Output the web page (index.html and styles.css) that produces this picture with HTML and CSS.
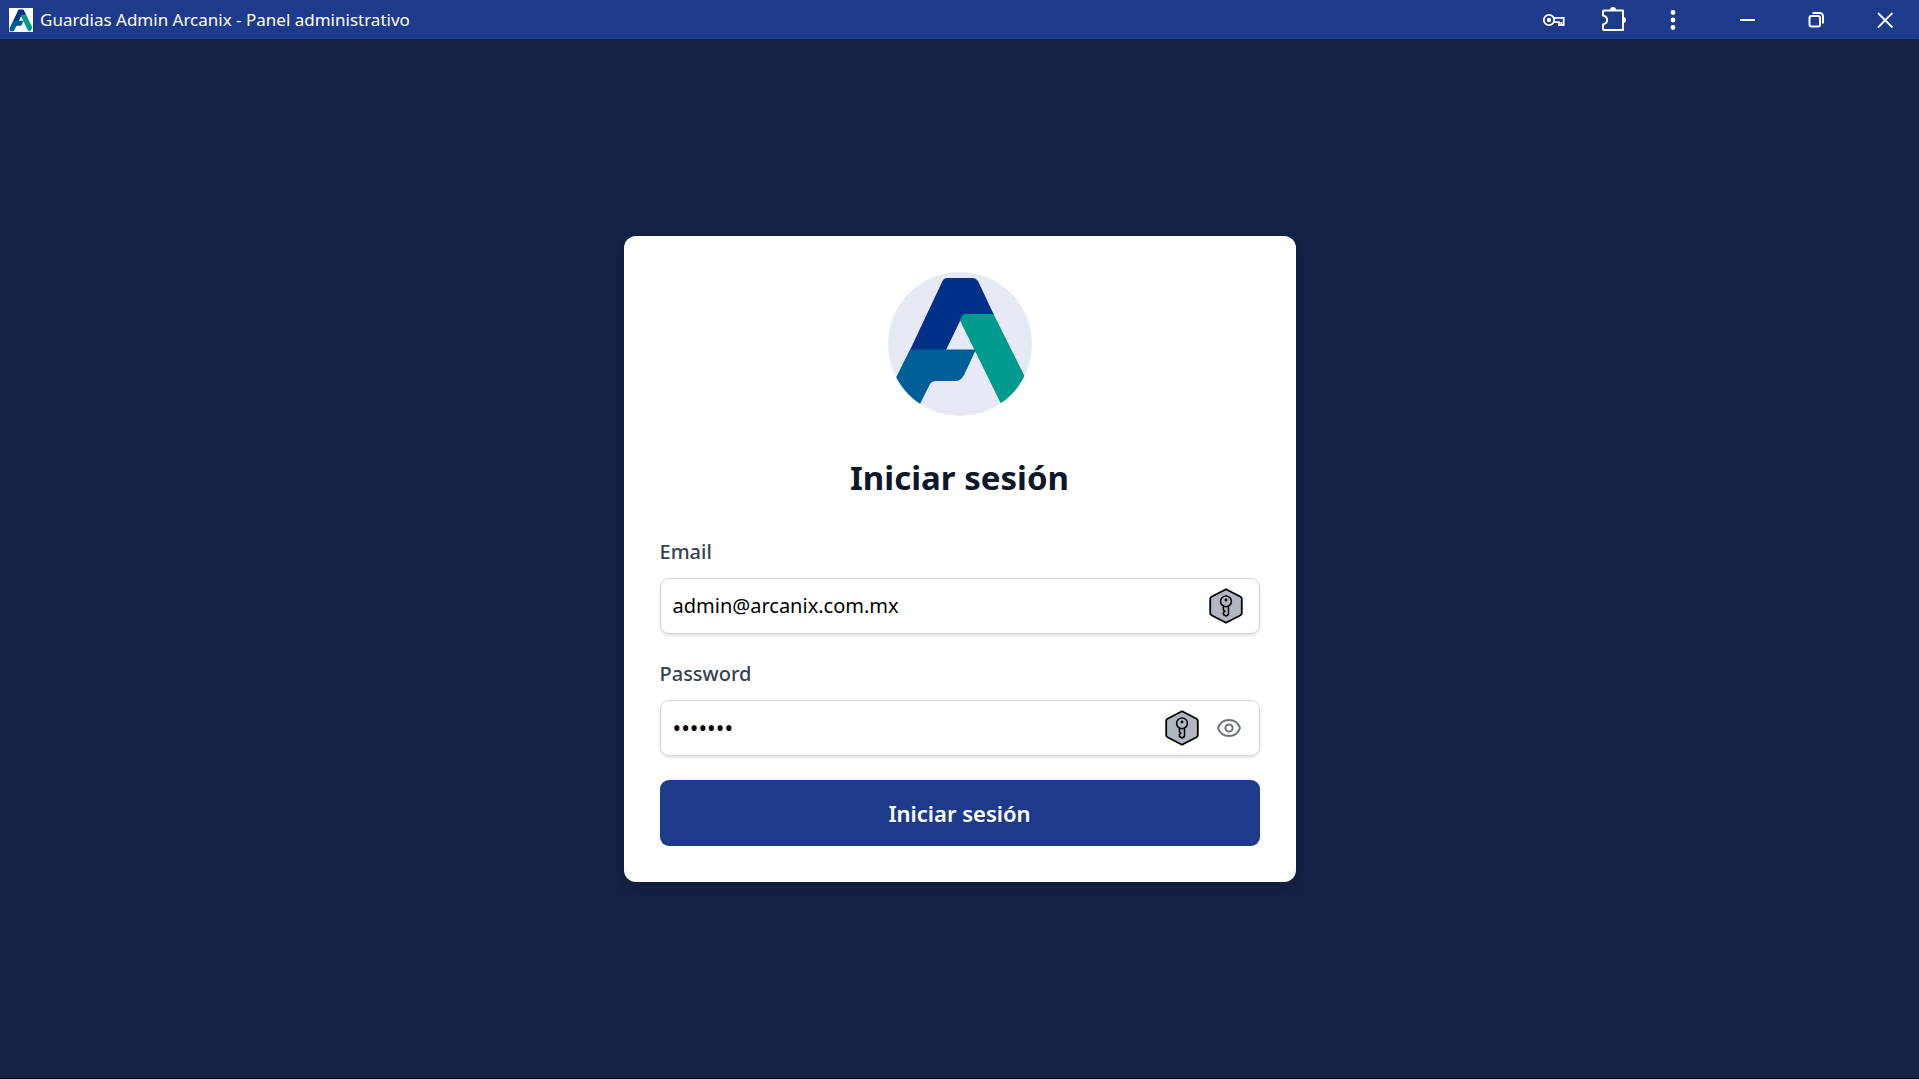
FILE: index.html
```html
<!DOCTYPE html>
<html lang="es">
<head>
<meta charset="utf-8">
<meta name="viewport" content="width=device-width, initial-scale=1">
<title>Guardias Admin Arcanix - Panel administrativo</title>
<link rel="stylesheet" href="styles.css">
</head>
<body class="app">
<svg class="sprite" aria-hidden="true">
  <symbol id="mark" viewBox="0 0 144 144">
    <path fill="#003087" d="M22 78 54.500 9Q56 6 59 6H85Q88 6 90 9L106 43H76L72.500 48 58 78Z"/>
    <path fill="#009b8e" d="M72 48.500 74 44Q75 42 77 42H105.500L146 123 122 150Z"/>
    <path fill="#005e97" d="M22 77.500H88L76 103Q73 109 67 109H48Q44 109 42 112L22 152-12 146Z"/>
  </symbol>
  <symbol id="badge" viewBox="0 0 34 36">
    <path d="M17 1.200 31.500 8.800Q32.800 9.500 32.800 11V25Q32.800 26.500 31.500 27.200L17 34.800 2.500 27.200Q1.200 26.500 1.200 25V11Q1.200 9.500 2.500 8.800Z" fill="#b0b7c0" stroke="#000" stroke-width="1.800" stroke-linejoin="round"/>
    <g fill="none" stroke="#000" stroke-width="1.500" stroke-linejoin="round">
      <circle cx="17" cy="13.300" r="5.400"/>
      <path d="M14.400 18.300V22l1.500 1.200-1.500 1.400V26.500L17.200 28 19.500 26.500V18.300"/>
    </g>
    <circle cx="17" cy="12" r="1.400"/>
  </symbol>
</svg>

<header class="titlebar">
  <svg class="titlebar-logo" viewBox="-4 -4 152 152" aria-hidden="true"><use href="#mark" width="144" height="144"/></svg>
  <span class="titlebar-title">Guardias Admin Arcanix - Panel administrativo</span>
  <div class="tools">
    <button class="tool" type="button" aria-label="Contraseñas">
      <svg width="24" height="24" viewBox="0 0 24 24" fill="none" stroke="#fff" stroke-width="1.800"><circle cx="7" cy="12" r="5.200"/><circle cx="7" cy="12" r="2.200" fill="#fff" stroke="none"/><path d="M11.800 9.800H21.700V17H17V14.200H11.800M19.300 14V17"/></svg>
    </button>
    <button class="tool" type="button" aria-label="Extensiones">
      <svg width="26" height="26" viewBox="0 0 26 26" fill="none" stroke="#fff" stroke-width="2" stroke-linejoin="round"><path d="M3 3.500H22V23H3Q2 23 2 22V17.500C7.500 16 7.500 10 2 8.500V4.500Q2 3.500 3 3.500Z"/><path fill="#fff" stroke="none" d="M9 3A3 3 0 0 1 15 3ZM22 10A3 3 0 0 1 22 16Z"/></svg>
    </button>
    <button class="tool" type="button" aria-label="Menú">
      <svg width="24" height="24" viewBox="0 0 24 24" fill="#fff"><circle cx="11" cy="4.500" r="2.400"/><circle cx="11" cy="12" r="2.400"/><circle cx="11" cy="19.500" r="2.400"/></svg>
    </button>
  </div>
  <div class="window-controls">
    <button class="window-button" type="button" aria-label="Minimizar">
      <svg width="16" height="16" viewBox="0 0 16 16" stroke="#fff" stroke-width="2"><path d="M1 8H16"/></svg>
    </button>
    <button class="window-button" type="button" aria-label="Restaurar">
      <svg width="16" height="16" viewBox="0 0 16 16" fill="none" stroke="#fff" stroke-width="2"><rect x="1.500" y="4" width="10.500" height="10.500" rx="2"/><path d="M4.500 1H11.500Q15 1 15 4.500V11.500"/></svg>
    </button>
    <button class="window-button" type="button" aria-label="Cerrar">
      <svg width="16" height="16" viewBox="0 0 16 16" stroke="#fff" stroke-width="1.900"><path d="M1 1 15.500 15.500M15.500 1 1 15.500"/></svg>
    </button>
  </div>
</header>

<main class="page">
  <form class="card">
    <svg class="logo" viewBox="0 0 144 144" role="img" aria-label="Arcanix"><rect width="144" height="144" fill="#e7eaf4"/><use href="#mark" width="144" height="144"/></svg>
    <h1 class="heading">Iniciar sesión</h1>
    <div class="field">
      <label class="label" for="email">Email</label>
      <div class="control">
        <input class="input" id="email" type="email" value="admin@arcanix.com.mx">
        <svg class="badge" aria-hidden="true"><use href="#badge"/></svg>
      </div>
    </div>
    <div class="field">
      <label class="label" for="password">Password</label>
      <div class="control control-password">
        <input class="input input-password" id="password" type="password" value="arcanix">
        <svg class="badge" aria-hidden="true"><use href="#badge"/></svg>
        <button class="reveal" type="button" aria-label="Mostrar contraseña">
          <svg width="26" height="26" viewBox="0 0 26 26" fill="none" stroke="#6b7280" stroke-width="2" stroke-linejoin="round"><circle cx="13" cy="13" r="3.600"/><path d="M2 13C3.700 8 8 5 13 5s9.300 3 11 8c-1.700 5-6 8-11 8S3.700 18 2 13z"/></svg>
        </button>
      </div>
    </div>
    <button class="submit" type="submit">Iniciar sesión</button>
  </form>
</main>
</body>
</html>
```
FILE: styles.css
```css
*,
*::before,
*::after {
  box-sizing: border-box;
}

.app {
  display: flex;
  flex-direction: column;
  min-height: 100vh;
  margin: 0;
  border-bottom: 1px solid #000;
  background: #132144;
  font-family: "Segoe UI", "Noto Sans", sans-serif;
}

.sprite {
  position: absolute;
  width: 0;
  height: 0;
}

button {
  padding: 0;
  border: 0;
  background: none;
  font-family: inherit;
  cursor: pointer;
}

svg {
  display: block;
}

.titlebar {
  display: flex;
  align-items: center;
  height: 39px;
  padding-left: 9px;
  background: #1e3a8a;
  color: #fff;
}

.titlebar-logo {
  width: 24px;
  height: 24px;
  background: #fff;
}

.titlebar-title {
  margin-left: 7px;
  font-size: 17px;
}

.tools {
  display: flex;
  gap: 24px;
  margin-left: auto;
  padding-right: 20px;
}

.tool {
  display: grid;
  place-items: center;
  width: 36px;
  height: 36px;
}

.window-controls {
  display: flex;
}

.window-button {
  display: grid;
  place-items: center;
  width: 69px;
  height: 39px;
}

.page {
  display: grid;
  flex: 1;
  place-items: center;
}

.card {
  display: flex;
  flex-direction: column;
  gap: 24px;
  width: 100%;
  max-width: 672px;
  padding: 36px;
  border-radius: 12px;
  background: #fff;
  box-shadow: 0 6px 9px rgba(0, 0, 0, 0.1);
}

.logo {
  align-self: center;
  width: 144px;
  height: 144px;
  border-radius: 50%;
}

.heading {
  margin: 14px 0 10px;
  color: #0f172a;
  font-size: 33px;
  font-weight: 700;
  line-height: 48px;
  text-align: center;
}

.field {
  display: flex;
  flex-direction: column;
  gap: 10px;
}

.label {
  color: #374151;
  font-size: 20px;
  font-weight: 500;
  line-height: 32px;
}

.control {
  display: flex;
  align-items: center;
  gap: 12px;
  height: 56px;
  padding: 0 16px 0 12px;
  border: 1px solid #d1d5db;
  border-radius: 9px;
  box-shadow: 0 2px 3px rgba(0, 0, 0, 0.1);
}

.control-password {
  padding-right: 12px;
}

.input {
  flex: 1;
  min-width: 0;
  padding: 0;
  border: 0;
  outline: 0;
  background: none;
  color: #000;
  font-family: inherit;
  font-size: 20px;
}

.input-password {
  font-size: 23px;
}

.badge {
  width: 34px;
  height: 36px;
}

.reveal {
  display: grid;
  place-items: center;
  width: 36px;
  height: 36px;
}

.submit {
  height: 66px;
  border-radius: 9px;
  background: #1e3a8a;
  color: #fff;
  font-size: 22px;
  font-weight: 600;
}
```
